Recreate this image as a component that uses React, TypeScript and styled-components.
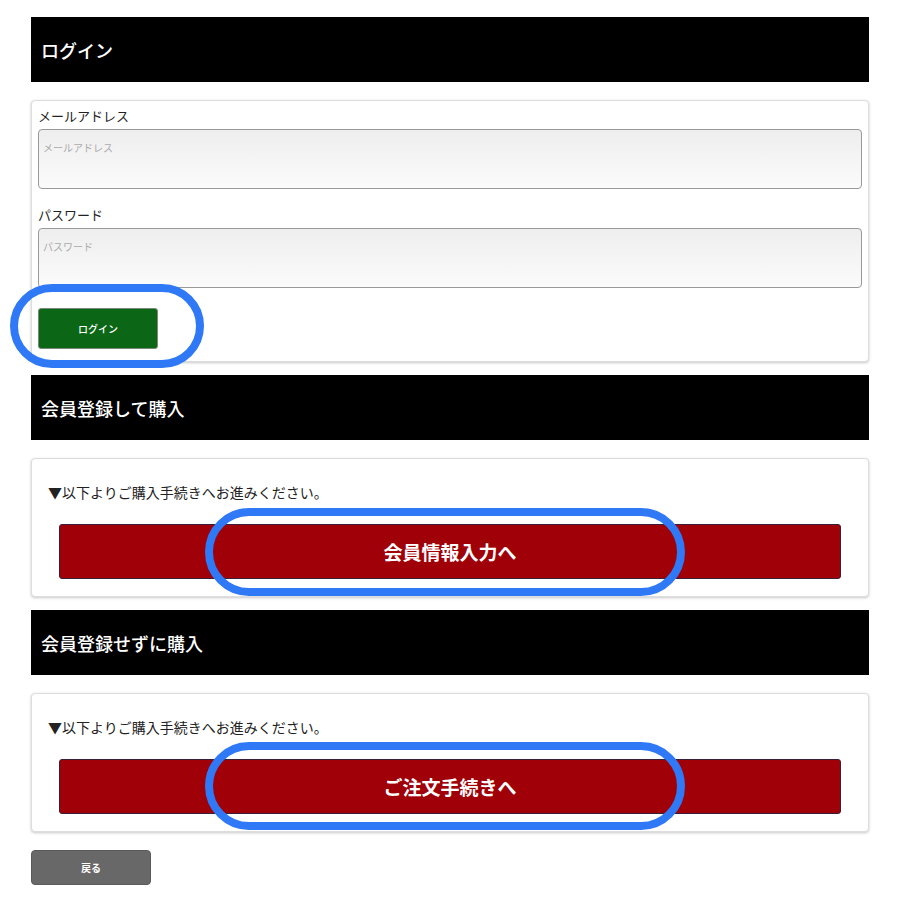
import React from "react";
import styled, { createGlobalStyle } from "styled-components";

const Global = createGlobalStyle`
  html, body { margin: 0; padding: 0; background: #fff; }
  body { font-family: "Noto Sans CJK JP", "Noto Sans", sans-serif; color: #222; }
  * { box-sizing: border-box; }
`;

const Page = styled.div`
  position: relative;
  width: 900px;
  padding: 17px 31px 16px;
`;

const SectionHeader = styled.h2<{ $gap?: number }>`
  margin: ${(p) => p.$gap ?? 0}px 0 0;
  height: 65px;
  background: #000;
  color: #fff;
  font-size: 18px;
  font-weight: 500;
  display: flex;
  align-items: center;
  padding-left: 10px;
`;

const Card = styled.div<{ $pad: string; $gap?: number }>`
  margin-top: ${(p) => p.$gap ?? 18}px;
  border: 1px solid #ddd;
  border-radius: 4px;
  box-shadow: 0 1px 3px rgba(0, 0, 0, 0.22);
  padding: ${(p) => p.$pad};
  background: #fff;
`;

const Label = styled.div<{ $top?: number }>`
  font-size: 13px;
  line-height: 16px;
  height: 16px;
  margin: ${(p) => p.$top ?? 0}px 0 5px;
  color: #222;
`;

const Field = styled.input`
  display: block;
  width: 100%;
  height: 60px;
  padding: 9px 4px 33px;
  border: 1px solid #999;
  border-radius: 4px;
  background: linear-gradient(#eeeeee, #fbfbfb);
  font-family: inherit;
  font-size: 10px;
  line-height: 18px;
  outline: none;
  &::placeholder { color: #aaa; }
`;

const LoginButton = styled.button`
  margin-top: 20px;
  width: 120px;
  height: 41px;
  background: #0b6616;
  border: 1px solid #7a8a7a;
  border-radius: 3px;
  color: #fff;
  font-family: inherit;
  font-size: 10px;
  font-weight: 500;
  display: block;
`;

const Notice = styled.p`
  margin: 0;
  font-size: 14px;
  line-height: 20px;
  height: 20px;
  color: #222;
  padding-left: 16px;
`;

const BigButton = styled.button`
  display: block;
  margin: 22px 0 0 27px;
  width: 782px;
  height: 55px;
  background: #a00008;
  border: 1px solid #3a1e38;
  border-radius: 3px;
  color: #fff;
  font-family: inherit;
  font-size: 19px;
  font-weight: 700;
`;

const BackButton = styled.button`
  display: block;
  margin-top: 18px;
  width: 120px;
  height: 35px;
  background: #686868;
  border: 1px solid #5a5a5a;
  border-radius: 4px;
  color: #fff;
  font-family: inherit;
  font-size: 10px;
  font-weight: 700;
`;

const Highlight = styled.div<{ $x: number; $y: number; $w: number; $h: number }>`
  position: absolute;
  left: ${(p) => p.$x}px;
  top: ${(p) => p.$y}px;
  width: ${(p) => p.$w}px;
  height: ${(p) => p.$h}px;
  border: 8px solid #2f78f6;
  border-radius: 999px;
  pointer-events: none;
`;

export default function App() {
  return (
    <>
      <Global />
      <Page>
        <SectionHeader>ログイン</SectionHeader>
        <Card $pad="7px 6px 12px">
          <Label>メールアドレス</Label>
          <Field placeholder="メールアドレス" />
          <Label $top={18}>パスワード</Label>
          <Field type="password" placeholder="パスワード" />
          <LoginButton>ログイン</LoginButton>
        </Card>

        <SectionHeader $gap={13}>会員登録して購入</SectionHeader>
        <Card $pad="23px 0 17px">
          <Notice>▼以下よりご購入手続きへお進みください。</Notice>
          <BigButton>会員情報入力へ</BigButton>
        </Card>

        <SectionHeader $gap={13}>会員登録せずに購入</SectionHeader>
        <Card $pad="23px 0 17px">
          <Notice>▼以下よりご購入手続きへお進みください。</Notice>
          <BigButton>ご注文手続きへ</BigButton>
        </Card>

        <BackButton>戻る</BackButton>

        <Highlight $x={10} $y={284} $w={194} $h={84} />
        <Highlight $x={205} $y={508} $w={480} $h={88} />
        <Highlight $x={205} $y={742} $w={480} $h={88} />
      </Page>
    </>
  );
}
